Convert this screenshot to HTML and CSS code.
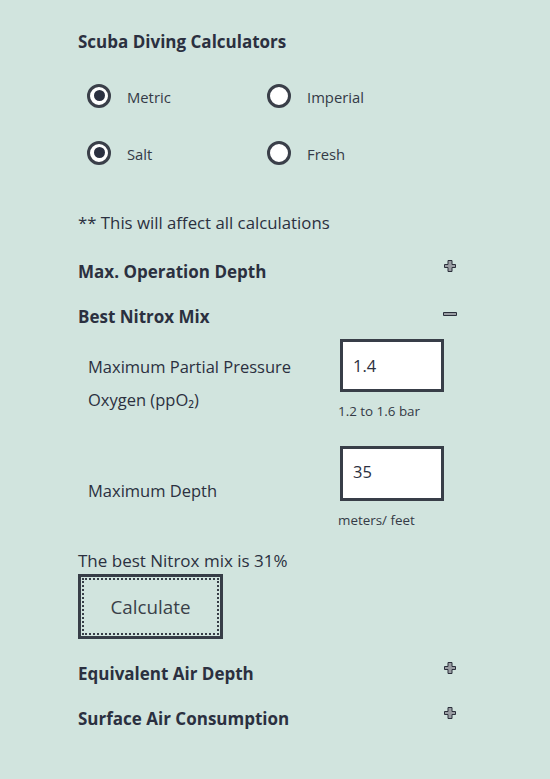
FILE: index.html
```html
<!DOCTYPE html>
<html lang="en">
<head>
<meta charset="utf-8">
<title>Scuba Diving Calculators</title>
<link rel="stylesheet" href="styles.css">
</head>
<body>
<main class="page">
  <h1 class="title">Scuba Diving Calculators</h1>

  <div class="options">
    <label class="radio"><span class="dot checked"></span><span class="radio-text">Metric</span></label>
    <label class="radio"><span class="dot"></span><span class="radio-text">Imperial</span></label>
    <label class="radio"><span class="dot checked"></span><span class="radio-text">Salt</span></label>
    <label class="radio"><span class="dot"></span><span class="radio-text">Fresh</span></label>
  </div>

  <p class="note">** This will affect all calculations</p>

  <div class="section-head">
    <span>Max. Operation Depth</span>
    <svg class="icon" width="14" height="14" viewBox="0 0 14 14"><path d="M5 1.5h4v4h3.5v3H9v4H5v-4H1.5v-3H5z" fill="#9a9da3" stroke="#2b2f3b" stroke-width="1"/></svg>
  </div>

  <div class="section-head">
    <span>Best Nitrox Mix</span>
    <svg class="icon" width="14" height="14" viewBox="0 0 14 14"><path d="M0.5 8.5h13v3h-13z" fill="#9a9da3" stroke="#2b2f3b" stroke-width="1"/></svg>
  </div>

  <div class="panel">
    <div class="field">
      <div class="field-label">Maximum Partial Pressure Oxygen (ppO₂)</div>
      <div class="field-input">
        <div class="box">1.4</div>
        <div class="hint">1.2 to 1.6 bar</div>
      </div>
    </div>
    <div class="field field-2">
      <div class="field-label label-low">Maximum Depth</div>
      <div class="field-input">
        <div class="box">35</div>
        <div class="hint">meters/ feet</div>
      </div>
    </div>
  </div>

  <p class="result">The best Nitrox mix is 31%</p>
  <button class="calc" type="button">Calculate</button>

  <div class="section-head after-btn">
    <span>Equivalent Air Depth</span>
    <svg class="icon" width="14" height="14" viewBox="0 0 14 14"><path d="M5 1.5h4v4h3.5v3H9v4H5v-4H1.5v-3H5z" fill="#9a9da3" stroke="#2b2f3b" stroke-width="1"/></svg>
  </div>
  <div class="section-head">
    <span>Surface Air Consumption</span>
    <svg class="icon" width="14" height="14" viewBox="0 0 14 14"><path d="M5 1.5h4v4h3.5v3H9v4H5v-4H1.5v-3H5z" fill="#9a9da3" stroke="#2b2f3b" stroke-width="1"/></svg>
  </div>
</main>
</body>
</html>
```

FILE: styles.css
```css
html, body {
  margin: 0;
  padding: 0;
  background: #d1e4de;
}
body {
  font-family: "Segoe UI", "Open Sans", "Noto Sans", sans-serif;
  color: #2b3040;
  height: 779px;
  overflow: hidden;
}
.page {
  width: 380px;
  margin-left: 78px;
  padding-top: 30px;
}
.title {
  margin: 0;
  font-size: 17px;
  line-height: 24px;
  font-weight: 700;
}
.options {
  margin-top: 13px;
  display: grid;
  grid-template-columns: 180px 180px;
  grid-auto-rows: 57px;
  padding-left: 9px;
}
.radio {
  display: flex;
  align-items: center;
  gap: 16px;
  font-size: 14.8px;
  color: #343a46;
}
.radio-text {
  padding-top: 3px;
}
.dot {
  box-sizing: border-box;
  width: 24px;
  height: 24px;
  border-radius: 50%;
  border: 3.5px solid #3a3f49;
  background: #fff;
  display: flex;
  align-items: center;
  justify-content: center;
}
.dot.checked::after {
  content: "";
  width: 11px;
  height: 11px;
  border-radius: 50%;
  background: #2b3040;
}
.note {
  margin: 30px 0 0;
  font-size: 16.8px;
  line-height: 24px;
}
.section-head {
  height: 45px;
  display: flex;
  align-items: center;
  justify-content: space-between;
  font-size: 17px;
  font-weight: 700;
}
.note + .section-head {
  margin-top: 14px;
}
.icon {
  margin-top: -11px;
  margin-right: 1px;
}
.field {
  display: flex;
  align-items: flex-start;
}
.field-label {
  box-sizing: border-box;
  width: 262px;
  padding: 11px 20px 0 10px;
  font-size: 16.5px;
  line-height: 33px;
}
.label-low {
  padding-top: 28px;
}
.field-input {
  display: flex;
  flex-direction: column;
}
.box {
  box-sizing: border-box;
  width: 104px;
  height: 53px;
  border: 3px solid #383e48;
  background: #fff;
  padding-left: 10px;
  font-size: 16.5px;
  line-height: 47px;
  color: #2b3040;
}
.field-2 .box {
  height: 55px;
  line-height: 45px;
}
.hint {
  margin: 11px 0 0 -2px;
  font-size: 13.4px;
  line-height: 16px;
  color: #343a46;
}
.field-2 {
  margin-top: 27px;
}
.result {
  margin: 21px 0 0;
  font-size: 17px;
  line-height: 24px;
}
.calc {
  margin-top: 1px;
  box-sizing: border-box;
  width: 145px;
  height: 65px;
  border: 3px solid #373d47;
  outline: 2px dotted #373d47;
  outline-offset: -6px;
  background: transparent;
  font-family: inherit;
  font-size: 18.8px;
  color: #3a3f48;
  display: block;
}
.after-btn {
  margin-top: 12px;
}
```
